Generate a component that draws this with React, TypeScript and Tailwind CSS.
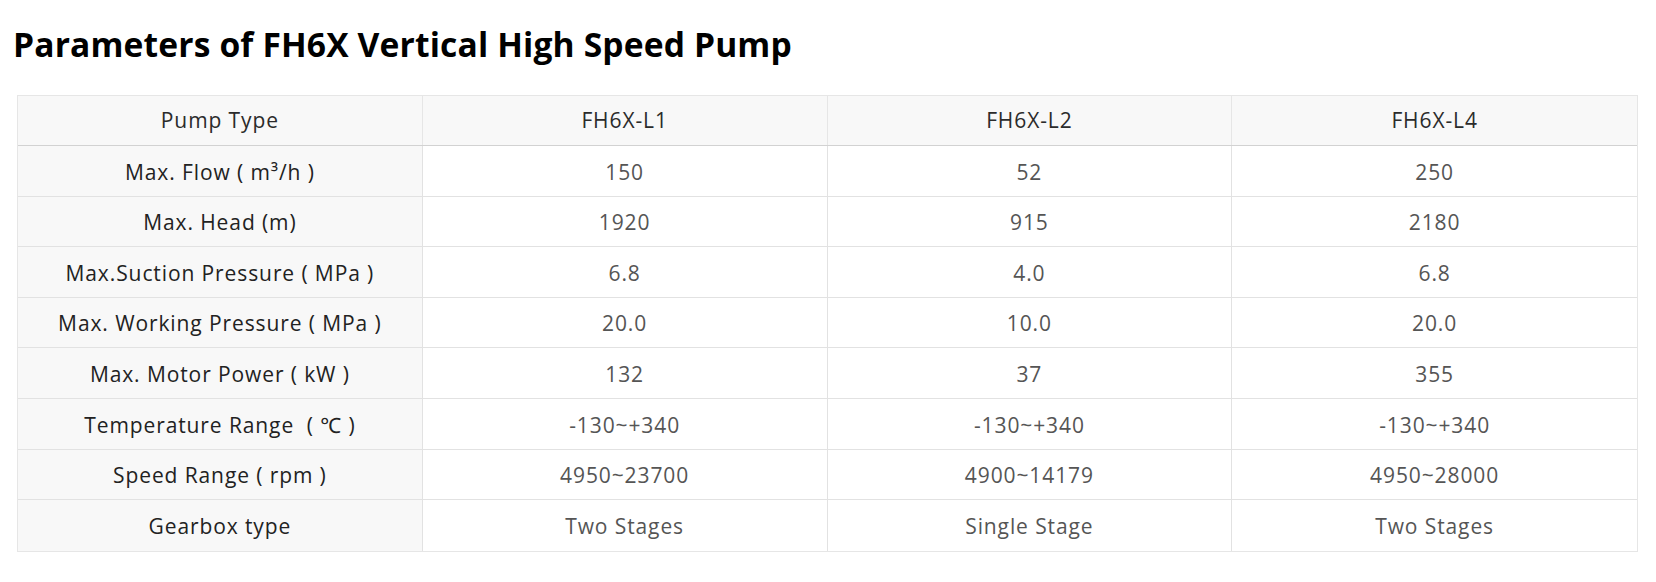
import React from "react";

const rows: string[][] = [
  ["Max. Flow ( m³/h )", "150", "52", "250"],
  ["Max. Head (m)", "1920", "915", "2180"],
  ["Max.Suction Pressure ( MPa )", "6.8", "4.0", "6.8"],
  ["Max. Working Pressure ( MPa )", "20.0", "10.0", "20.0"],
  ["Max. Motor Power ( kW )", "132", "37", "355"],
  ["Temperature Range  ( ℃ )", "-130~+340", "-130~+340", "-130~+340"],
  ["Speed Range ( rpm )", "4950~23700", "4900~14179", "4950~28000"],
  ["Gearbox type", "Two Stages", "Single Stage", "Two Stages"],
];

export default function App() {
  return (
    <div className="w-[1656px] h-[582px] bg-white" style={{ fontFamily: '"Open Sans", "Noto Sans", sans-serif' }}>
      <div className="pl-[13px] pt-[22px] h-[95px]">
        <h1 className="text-[33.6px] leading-[44px] font-bold text-black tracking-[0.15px]">
          Parameters of FH6X Vertical High Speed Pump
        </h1>
      </div>
      <div className="ml-[17px] w-[1621px] border border-[#e6e6e6]">
        <div className="grid grid-cols-4 h-[50px] bg-[#f8f8f8] border-b border-[#d2d2d2]">
          {["Pump Type", "FH6X-L1", "FH6X-L2", "FH6X-L4"].map((t, i) => (
            <div
              key={i}
              className={`flex items-center justify-center text-[21px] tracking-[0.9px] text-[#2b2b2b] ${i < 3 ? "border-r border-[#e6e6e6]" : ""}`}
            >
              {t}
            </div>
          ))}
        </div>
        {rows.map((r, ri) => (
          <div
            key={ri}
            className={`grid grid-cols-4 h-[50.6px] ${ri < rows.length - 1 ? "border-b border-[#e2e2e2]" : ""}`}
          >
            {r.map((t, i) => (
              <div
                key={i}
                className={`flex items-center justify-center pt-[3px] text-[21px] tracking-[0.9px] whitespace-pre ${i === 0 ? "bg-[#f8f8f8] text-[#222222]" : "bg-white text-[#555555]"} ${i < 3 ? "border-r border-[#e2e2e2]" : ""}`}
              >
                {t}
              </div>
            ))}
          </div>
        ))}
      </div>
    </div>
  );
}
